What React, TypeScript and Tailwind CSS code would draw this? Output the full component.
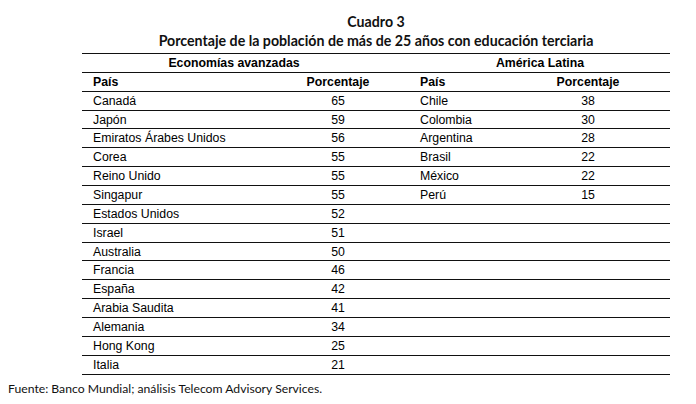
import React from 'react';

const advanced: [string, number][] = [
    ['Canadá', 65],
    ['Japón', 59],
    ['Emiratos Árabes Unidos', 56],
    ['Corea', 55],
    ['Reino Unido', 55],
    ['Singapur', 55],
    ['Estados Unidos', 52],
    ['Israel', 51],
    ['Australia', 50],
    ['Francia', 46],
    ['España', 42],
    ['Arabia Saudita', 41],
    ['Alemania', 34],
    ['Hong Kong', 25],
    ['Italia', 21],
];

const latam: [string, number][] = [
    ['Chile', 38],
    ['Colombia', 30],
    ['Argentina', 28],
    ['Brasil', 22],
    ['México', 22],
    ['Perú', 15],
];

const rowClass = "grid grid-cols-[218px_76px_134px_156px_1fr] h-[18.87px] items-center border-b-[1.3px] border-[#111]";

const App: React.FC = () => {
    return (
        <div className="w-[696px] h-[404px] bg-white text-black overflow-hidden">
            <div className="ml-[82px] w-[588px] pt-[12px]">
                <div className="text-center font-['Lato',sans-serif] font-bold text-[14.2px] leading-[19px] text-[#111]">
                    <div>Cuadro 3</div>
                    <div>Porcentaje de la población de más de 25 años con educación terciaria</div>
                </div>

                <div className="mt-[3px] border-t-[1.3px] border-[#111] font-['Liberation_Sans',Arial,sans-serif] text-[12.3px]">
                    <div className="flex h-[18.87px] items-center border-b-[1.3px] border-[#111] font-bold">
                        <div className="w-[304px] text-center">Economías avanzadas</div>
                        <div className="w-[284px] text-center pl-[24px]">América Latina</div>
                    </div>
                    <div className={rowClass + " font-bold"}>
                        <div className="pl-[11px]">País</div>
                        <div className="text-center">Porcentaje</div>
                        <div className="pl-[44px]">País</div>
                        <div className="text-center">Porcentaje</div>
                        <div />
                    </div>
                    {advanced.map(([country, value], i) => (
                        <div key={country} className={rowClass}>
                            <div className="pl-[11px]">{country}</div>
                            <div className="text-center">{value}</div>
                            <div className="pl-[44px]">{latam[i]?.[0] ?? ''}</div>
                            <div className="text-center">{latam[i]?.[1] ?? ''}</div>
                            <div />
                        </div>
                    ))}
                </div>
            </div>
            <div className="mt-[5px] pl-[8px] font-['Lato',sans-serif] text-[12.2px] text-[#111]">
                Fuente: Banco Mundial; análisis Telecom Advisory Services.
            </div>
        </div>
    );
};

export default App;
